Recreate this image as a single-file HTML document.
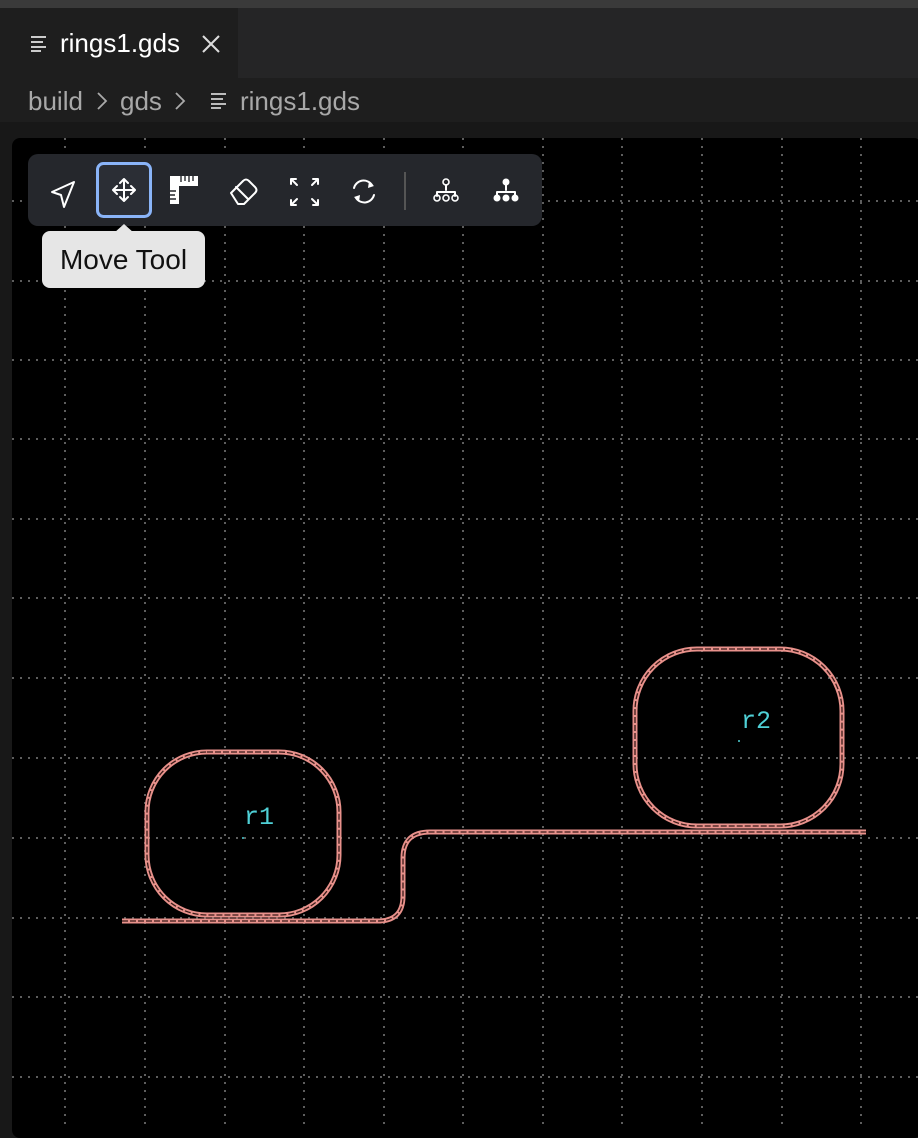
<!DOCTYPE html>
<html><head><meta charset="utf-8"><style>
*{margin:0;padding:0;box-sizing:border-box}
body{width:918px;height:1128px;background:#181818;position:relative;overflow:hidden;font-family:"Liberation Sans",sans-serif}
.top{position:absolute;left:0;top:0;width:918px;height:8px;background:#3a3a3a}
.tabbar{position:absolute;left:0;top:8px;width:918px;height:70px;background:#252526}
.tab{position:absolute;left:0;top:8px;width:238px;height:70px;background:#1e1e1e;color:#fff;font-size:26px}
.crumb{position:absolute;left:0;top:78px;width:918px;height:44px;background:#1e1e1e;color:#a8a8a8;font-size:26px}
.canvas{position:absolute;left:12px;top:138px;width:910px;height:1000px;background:#000;border-radius:8px;overflow:hidden}
.tb{position:absolute;left:28px;top:154px;width:514px;height:72px;background:#25272c;border-radius:10px}
.tip{position:absolute;left:42px;top:231px;width:163px;height:57px;background:#e6e6e6;border-radius:8px;font-size:28px;color:#111;line-height:57px;text-align:center}
</style></head><body>
<div class="top"></div>
<div class="tabbar"></div>
<div class="tab">
<svg style="position:absolute;left:30px;top:26px" width="18" height="18"><g stroke="#ccc" stroke-width="2"><line x1="1" y1="3" x2="16" y2="3"/><line x1="1" y1="8" x2="13" y2="8"/><line x1="1" y1="13" x2="16" y2="13"/><line x1="1" y1="17" x2="11" y2="17"/></g></svg>
<span style="position:absolute;left:60px;top:20px">rings1.gds</span>
<svg style="position:absolute;left:202px;top:27px" width="18" height="18"><g stroke="#ddd" stroke-width="2"><line x1="1" y1="1" x2="17" y2="17"/><line x1="17" y1="1" x2="1" y2="17"/></g></svg>
</div>
<div class="crumb">
<span style="position:absolute;left:28px;top:8px">build</span>
<svg style="position:absolute;left:96px;top:13px" width="12" height="20"><path d="M2 2 L10 10 L2 18" stroke="#aaa" stroke-width="1.8" fill="none"/></svg>
<span style="position:absolute;left:120px;top:8px">gds</span>
<svg style="position:absolute;left:174px;top:13px" width="12" height="20"><path d="M2 2 L10 10 L2 18" stroke="#aaa" stroke-width="1.8" fill="none"/></svg>
<svg style="position:absolute;left:210px;top:14px" width="18" height="18"><g stroke="#bbb" stroke-width="2"><line x1="1" y1="2" x2="16" y2="2"/><line x1="1" y1="7" x2="13" y2="7"/><line x1="1" y1="12" x2="16" y2="12"/><line x1="1" y1="16" x2="11" y2="16"/></g></svg>
<span style="position:absolute;left:240px;top:8px">rings1.gds</span>
</div>
<div class="canvas"></div>
<svg style="position:absolute;left:0;top:0" width="918" height="1128">
<defs><clipPath id="c"><rect x="12" y="138" width="910" height="1000" rx="8"/></clipPath></defs>
<g clip-path="url(#c)" stroke="#5e5e5e" stroke-width="2" stroke-dasharray="2 6">
<line x1="65" y1="138" x2="65" y2="1128"/><line x1="145" y1="138" x2="145" y2="1128"/><line x1="225" y1="138" x2="225" y2="1128"/><line x1="304" y1="138" x2="304" y2="1128"/><line x1="384" y1="138" x2="384" y2="1128"/><line x1="463" y1="138" x2="463" y2="1128"/><line x1="543" y1="138" x2="543" y2="1128"/><line x1="622" y1="138" x2="622" y2="1128"/><line x1="702" y1="138" x2="702" y2="1128"/><line x1="782" y1="138" x2="782" y2="1128"/><line x1="861" y1="138" x2="861" y2="1128"/>
<line x1="12" y1="201" x2="918" y2="201"/><line x1="12" y1="281" x2="918" y2="281"/><line x1="12" y1="360" x2="918" y2="360"/><line x1="12" y1="439" x2="918" y2="439"/><line x1="12" y1="519" x2="918" y2="519"/><line x1="12" y1="598" x2="918" y2="598"/><line x1="12" y1="678" x2="918" y2="678"/><line x1="12" y1="758" x2="918" y2="758"/><line x1="12" y1="838" x2="918" y2="838"/><line x1="12" y1="918" x2="918" y2="918"/><line x1="12" y1="997" x2="918" y2="997"/><line x1="12" y1="1077" x2="918" y2="1077"/>
</g>
<g fill="none">
<g stroke="#e8918b" stroke-width="5">
<rect x="147" y="752" width="192" height="163" rx="60"/>
<rect x="635" y="649" width="207" height="177" rx="62"/>
<path d="M122 921 L378 921 Q403 921 403 896 L403 858 Q403 832 430 832 L866 832"/>
</g>
<g stroke="#3a1a18" stroke-width="1.3" stroke-dasharray="6 2">
<rect x="147" y="752" width="192" height="163" rx="60"/>
<rect x="635" y="649" width="207" height="177" rx="62"/>
<path d="M122 921 L378 921 Q403 921 403 896 L403 858 Q403 832 430 832 L866 832"/>
</g>
</g>
<g fill="#4fd0d6" font-family="Liberation Mono,monospace" font-size="25"><text x="244" y="824">r1</text><text x="741" y="728">r2</text></g>
<circle cx="243" cy="838" r="1" fill="#4fd0d6"/><circle cx="739" cy="741" r="1" fill="#4fd0d6"/>
</svg>
<div class="tb"></div>
<svg style="position:absolute;left:28px;top:154px" width="514" height="72">
<rect x="69.5" y="9.5" width="53" height="53" rx="6" fill="#2b2e35" stroke="#8ab4f8" stroke-width="3"/>
<g stroke="#fff" stroke-width="2" fill="none" stroke-linejoin="round" stroke-linecap="round">
<path d="M24 38 L46 28 L36 53 L33 41 Z"/>
<path d="M96 25 V47 M85 36 H107 M92 29 L96 25 L100 29 M92 43 L96 47 L100 43 M89 32 L85 36 L89 40 M103 32 L107 36 L103 40"/>
<path d="M203 39 L215 27 Q218 24 221 27 L227 33 Q230 36 227 39 L216 50 L210 50 Z M208 33 L220 45"/>
<path d="M263 25 L269 31 M263 25 V30 M263 25 H268 M290 25 L284 31 M290 25 V30 M290 25 H285 M263 51 L269 45 M263 51 V46 M263 51 H268 M290 51 L284 45 M290 51 V46 M290 51 H285"/>
<path d="M326 34 A10 10 0 0 1 344 31 M346 41 A10 10 0 0 1 328 44"/>
<path d="M418 31 V36 M409 42 V38 H427 V42"/>
<circle cx="418" cy="28" r="3" stroke-width="1.6"/><circle cx="409" cy="44" r="3" stroke-width="1.6"/><circle cx="418" cy="44" r="3" stroke-width="1.6"/><circle cx="427" cy="44" r="3" stroke-width="1.6"/>
<path d="M478 31 V36 M469 42 V38 H487 V42"/>
</g>
<path d="M341 27 L346 32 L340 34 Z M331 48 L326 43 L332 41 Z" fill="#fff"/>
<g fill="#fff"><path d="M142 22 H170 V32 H151 V50 H142 Z"/><circle cx="478" cy="28" r="3.5"/><circle cx="469" cy="44" r="3.5"/><circle cx="478" cy="44" r="3.5"/><circle cx="487" cy="44" r="3.5"/></g>
<g stroke="#25272c" stroke-width="1.4"><path d="M153 22 V28 M157 22 V27 M161 22 V28 M165 22 V27 M142 37 H148 M142 41 H147 M142 45 H148"/></g>
<line x1="377" y1="18" x2="377" y2="56" stroke="#555" stroke-width="2"/>
</svg>
<svg style="position:absolute;left:114px;top:224px" width="20" height="9"><path d="M0 9 L10 0 L20 9 Z" fill="#e6e6e6"/></svg>
<div class="tip">Move Tool</div>
</body></html>
